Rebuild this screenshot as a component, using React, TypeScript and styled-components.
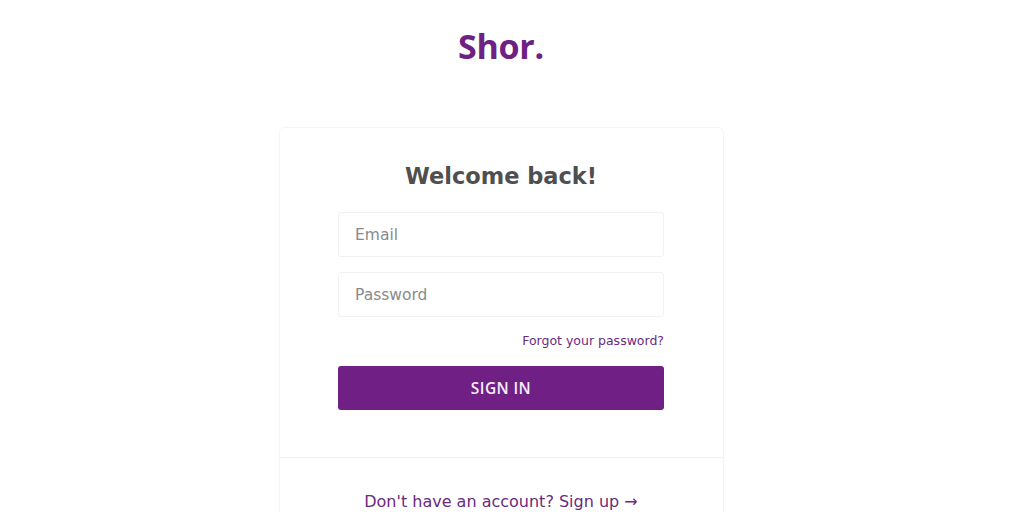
import React from "react";
import styled, { createGlobalStyle } from "styled-components";

const Global = createGlobalStyle`
  html, body { margin: 0; padding: 0; background: #ffffff; }
  body { font-family: "DejaVu Sans", "Open Sans", sans-serif; }
  * { box-sizing: border-box; }
`;

const Page = styled.div`
  width: 1002px;
  height: 512px;
  overflow: hidden;
  display: flex;
  flex-direction: column;
  align-items: center;
  padding-top: 23px;
`;

const Logo = styled.div`
  font-family: "Open Sans", sans-serif;
  font-weight: 700;
  font-size: 34px;
  line-height: 46px;
  color: #6c2183;
  letter-spacing: -0.3px;
`;

const Card = styled.div`
  margin-top: 58px;
  width: 445px;
  border: 1px solid #f5f5f5;
  border-radius: 6px;
  box-shadow: 0 1px 4px rgba(0, 0, 0, 0.02);
  display: flex;
  flex-direction: column;
`;

const Body = styled.div`
  display: flex;
  flex-direction: column;
  align-items: center;
  padding: 31px 0 47px;
`;

const Title = styled.h1`
  margin: 0;
  font-size: 22.5px;
  line-height: 34px;
  font-weight: 700;
  color: #4f4f4f;
`;

const Form = styled.form`
  margin-top: 19px;
  width: 326px;
  display: flex;
  flex-direction: column;
`;

const Input = styled.input<{ $gap?: number }>`
  height: 45px;
  width: 100%;
  margin-top: ${(p) => p.$gap ?? 0}px;
  border: 1px solid #f2f2f2;
  border-radius: 3px;
  padding: 0 16px;
  font-family: "DejaVu Sans", sans-serif;
  font-size: 15.5px;
  color: #555;
  outline: none;
  &::placeholder { color: #8a8a8a; }
`;

const Forgot = styled.a`
  align-self: flex-end;
  margin-top: 16px;
  font-size: 12.5px;
  line-height: 16px;
  color: #6a2a7e;
  text-decoration: none;
`;

const Button = styled.button`
  margin-top: 17px;
  height: 44px;
  width: 100%;
  border: none;
  border-radius: 3px;
  background: #701f84;
  color: #f6eef8;
  font-family: "Open Sans", sans-serif;
  font-size: 15.5px;
  font-weight: 600;
  letter-spacing: 0.4px;
`;

const Footer = styled.div`
  border-top: 1px solid #f3f3f3;
  display: flex;
  justify-content: center;
  padding-top: 34px;
  height: 80px;
`;

const SignUp = styled.a`
  font-size: 16px;
  line-height: 20px;
  color: #6a2a7e;
  text-decoration: none;
`;

export default function App() {
  return (
    <>
      <Global />
      <Page>
        <Logo>Shor.</Logo>
        <Card>
          <Body>
            <Title>Welcome back!</Title>
            <Form onSubmit={(e) => e.preventDefault()}>
              <Input placeholder="Email" />
              <Input $gap={15} type="password" placeholder="Password" />
              <Forgot href="#">Forgot your password?</Forgot>
              <Button type="submit">SIGN IN</Button>
            </Form>
          </Body>
          <Footer>
            <SignUp href="#">Don't have an account? Sign up →</SignUp>
          </Footer>
        </Card>
      </Page>
    </>
  );
}
